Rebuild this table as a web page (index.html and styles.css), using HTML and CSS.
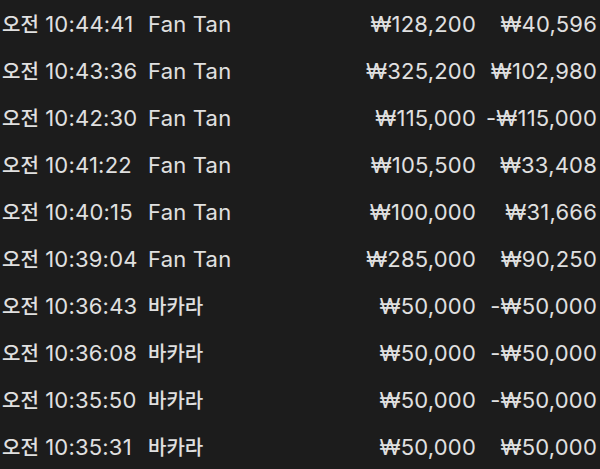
FILE: index.html
```html
<!DOCTYPE html>
<html lang="ko">
<head>
    <meta charset="UTF-8">
    <meta name="viewport" content="width=device-width, initial-scale=1.0">
    <title>베팅 내역</title>
    <link rel="stylesheet" href="styles.css">
</head>
<body>
    <div class="history">
        <div class="row"><span class="time"><span class="ko">오전</span> 10:44:41</span><span class="game">Fan Tan</span><span class="bet">₩128,200</span><span class="result">₩40,596</span></div>
        <div class="row"><span class="time"><span class="ko">오전</span> 10:43:36</span><span class="game">Fan Tan</span><span class="bet">₩325,200</span><span class="result">₩102,980</span></div>
        <div class="row"><span class="time"><span class="ko">오전</span> 10:42:30</span><span class="game">Fan Tan</span><span class="bet">₩115,000</span><span class="result">-₩115,000</span></div>
        <div class="row"><span class="time"><span class="ko">오전</span> 10:41:22</span><span class="game">Fan Tan</span><span class="bet">₩105,500</span><span class="result">₩33,408</span></div>
        <div class="row"><span class="time"><span class="ko">오전</span> 10:40:15</span><span class="game">Fan Tan</span><span class="bet">₩100,000</span><span class="result">₩31,666</span></div>
        <div class="row"><span class="time"><span class="ko">오전</span> 10:39:04</span><span class="game">Fan Tan</span><span class="bet">₩285,000</span><span class="result">₩90,250</span></div>
        <div class="row"><span class="time"><span class="ko">오전</span> 10:36:43</span><span class="game ko">바카라</span><span class="bet">₩50,000</span><span class="result">-₩50,000</span></div>
        <div class="row"><span class="time"><span class="ko">오전</span> 10:36:08</span><span class="game ko">바카라</span><span class="bet">₩50,000</span><span class="result">-₩50,000</span></div>
        <div class="row"><span class="time"><span class="ko">오전</span> 10:35:50</span><span class="game ko">바카라</span><span class="bet">₩50,000</span><span class="result">-₩50,000</span></div>
        <div class="row"><span class="time"><span class="ko">오전</span> 10:35:31</span><span class="game ko">바카라</span><span class="bet">₩50,000</span><span class="result">₩50,000</span></div>
    </div>
</body>
</html>
```

FILE: styles.css
```css
body {
    margin: 0;
    background-color: #1c1c1c;
    color: #e0e0e0;
    font-family: Inter, "Noto Sans CJK KR", sans-serif;
    font-size: 22px;
}
.history {
    padding: 0 3px 0 2px;
}
.row {
    display: grid;
    grid-template-columns: 146px 1fr auto 121px;
    align-items: center;
    height: 47px;
    white-space: nowrap;
    letter-spacing: 0.2px;
}
.ko {
    font-size: 20px;
    font-weight: 500;
    letter-spacing: 0;
}
.bet,
.result {
    text-align: right;
}
```
